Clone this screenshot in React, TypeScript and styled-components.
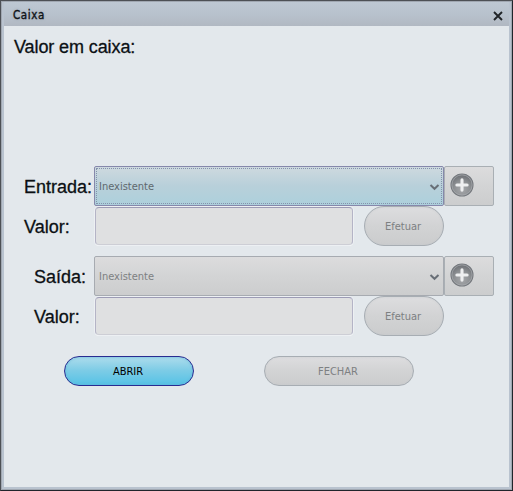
import React from "react";
import styled, { createGlobalStyle, css } from "styled-components";

const Global = createGlobalStyle`
  * { box-sizing: border-box; }
  html, body { margin: 0; padding: 0; }
  body { overflow: hidden; }
`;

const uiFont = css`
  font-family: "DejaVu Sans Condensed", "DejaVu Sans", sans-serif;
  font-stretch: condensed;
  font-size: 11px;
`;

const Frame = styled.div`
  width: 513px;
  height: 491px;
  display: flex;
  flex-direction: column;
  border: 1px solid #20252b;
  border-top-color: #4d5055;
  border-left-color: #4d5055;
  background: #b9c3cf;
  box-shadow: inset 0 0 0 1px #a0a7b1;
  padding: 1px 3px 3px;
`;

const TitleBar = styled.header`
  height: 24px;
  flex: none;
  display: flex;
  align-items: center;
  justify-content: space-between;
  padding: 1px 5px 0 9px;
  background: linear-gradient(#bec8d3, #b8c2cd 50%, #b1b8c2);
`;

const Title = styled.span`
  ${uiFont}
  font-size: 11.5px;
  line-height: 14px;
  color: #101418;
  -webkit-text-stroke: 0.35px #101418;
  text-shadow: 0 0 3px #929aa3;
  letter-spacing: 0.6px;
`;

const CloseButton = styled.button`
  width: 12px;
  height: 12px;
  padding: 0;
  border: 0;
  background: none;
  display: grid;
  place-items: center;
  margin-top: 2px;
`;

const Body = styled.main`
  flex: 1;
  background: #e3e8ec;
  padding: 10px 15px 0 10px;
`;

const Label = styled.span<{ $indent?: number }>`
  font-family: "Liberation Sans", Arial, sans-serif;
  font-size: 18px;
  line-height: 22px;
  color: #0b1014;
  -webkit-text-stroke: 0.3px #0b1014;
  white-space: nowrap;
  padding-left: ${(p) => p.$indent ?? 0}px;
`;

const Balance = styled.div`
  height: 130px;
  display: flex;
  align-items: flex-start;
  letter-spacing: -0.1px;
`;

const Section = styled.section`
  margin-bottom: 10px;
`;

const Row = styled.div`
  display: grid;
  grid-template-columns: 80px 350px 50px;
  height: 40px;
  align-items: center;

  > ${Label} {
    padding-top: 2px;
  }
`;

const Select = styled.div<{ $focused?: boolean }>`
  ${uiFont}
  height: 40px;
  display: flex;
  align-items: center;
  justify-content: space-between;
  padding: 2px 3px 0 4px;
  color: ${(p) => (p.$focused ? "#5f686e" : "#7d8082")};
  border: 1px solid ${(p) => (p.$focused ? "#8688ab" : "#a7abb1")};
  border-radius: 2px;
  background: ${(p) =>
    p.$focused
      ? "linear-gradient(#ced9df, #b8d0da 50%, #add0dc)"
      : "linear-gradient(#dcdcdd, #d3d4d5 50%, #cccdce)"};
  outline: ${(p) => (p.$focused ? "1px dotted #8492ac" : "none")};
  outline-offset: -3px;
`;

const Value = styled.span`
  line-height: 14px;
`;

const AddButton = styled.button`
  width: 50px;
  height: 40px;
  padding: 0 0 3px 5px;
  display: flex;
  align-items: center;
  border: 1px solid #a9afb4;
  border-radius: 2px;
  background: linear-gradient(#dcdcdd, #d3d4d5 50%, #cccdce);
`;

const Entry = styled.div`
  display: flex;
  align-items: center;
  justify-content: space-between;
`;

const Field = styled.input`
  width: 258px;
  height: 38px;
  margin-left: 1px;
  padding: 0 6px;
  border: 1px solid #b4b4c6;
  border-top-color: #9c9bb5;
  border-bottom-color: #cdced5;
  border-radius: 4px;
  background: #dfe0e1;
  box-shadow: 0 0 0 1px #edf0f3, 0 1px 0 #fafbfc;
  outline: none;
`;

const Pill = styled.button<{ $width: number; $height: number; $active?: boolean }>`
  ${uiFont}
  width: ${(p) => p.$width}px;
  height: ${(p) => p.$height}px;
  padding: 1px 2px 0 0;
  border-radius: 20px;
  line-height: 14px;
  border: 1px solid ${(p) => (p.$active ? "#292c91" : "#a7adb3")};
  color: ${(p) => (p.$active ? "#000" : "#7d8082")};
  background: ${(p) =>
    p.$active
      ? "linear-gradient(#addcec, #7dcce6 48%, #55c2e6)"
      : "linear-gradient(#dddddf, #d2d3d4 50%, #cbcccd)"};
  box-shadow: ${(p) => (p.$active ? "inset 0 0 3px #64b3d4" : "inset 0 0 2px #c6c9cc")};
`;

const Actions = styled.footer`
  display: flex;
  gap: 70px;
  padding: 10px 0 0 50px;
`;

const Chevron = () => (
  <svg width="11" height="8" viewBox="0 0 11 8" fill="none">
    <path d="M1.5 2 L5.5 5.8 L9.5 2" stroke="#686f77" strokeWidth="2" />
  </svg>
);

const PlusIcon = ({ id }: { id: string }) => (
  <svg width="24" height="24" viewBox="0 0 24 24">
    <defs>
      <radialGradient id={id} cx="50%" cy="70%" r="65%">
        <stop offset="0" stopColor="#a6a8ab" />
        <stop offset="0.6" stopColor="#8b8e91" />
        <stop offset="1" stopColor="#6e7176" />
      </radialGradient>
    </defs>
    <circle cx="12" cy="12" r="11" fill={`url(#${id})`} stroke="#74787d" strokeWidth="1.1" />
    <circle cx="12" cy="12" r="10.1" fill="none" stroke="#abaeb1" strokeWidth="0.7" />
    <path d="M12 6.9v10.2M6.9 12h10.2" stroke="#eeeff0" strokeWidth="3.1" strokeLinecap="round" />
  </svg>
);

interface MovementProps {
  id: string;
  label: string;
  indent: number;
  focused?: boolean;
}

const Movement = ({ id, label, indent, focused }: MovementProps) => (
  <Section>
    <Row>
      <Label $indent={indent}>{label}</Label>
      <Select $focused={focused}>
        <Value>Inexistente</Value>
        <Chevron />
      </Select>
      <AddButton aria-label="Adicionar">
        <PlusIcon id={id} />
      </AddButton>
    </Row>
    <Row>
      <Label $indent={indent}>Valor:</Label>
      <Entry>
        <Field readOnly />
        <Pill $width={80} $height={40}>Efetuar</Pill>
      </Entry>
    </Row>
  </Section>
);

export default function App() {
  return (
    <>
      <Global />
      <Frame>
        <TitleBar>
          <Title>Caixa</Title>
          <CloseButton aria-label="Fechar">
            <svg width="10" height="10" viewBox="0 0 10 10">
              <path d="M1 1 L9 9 M9 1 L1 9" stroke="#202428" strokeWidth="1.9" />
            </svg>
          </CloseButton>
        </TitleBar>
        <Body>
          <Balance>
            <Label>Valor em caixa:</Label>
          </Balance>
          <Movement id="plus-in" label="Entrada:" indent={10} focused />
          <Movement id="plus-out" label="Saída:" indent={20} />
          <Actions>
            <Pill $width={130} $height={30} $active>ABRIR</Pill>
            <Pill $width={150} $height={30}>FECHAR</Pill>
          </Actions>
        </Body>
      </Frame>
    </>
  );
}
